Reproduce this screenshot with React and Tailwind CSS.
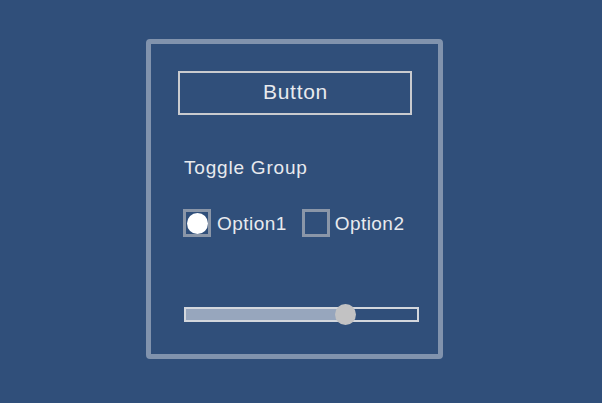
export default function App() {
  return (
    <div
      className="h-[403px] w-[602px] bg-[#304f7a] pl-[146px] pt-[39px] text-[#e8eaee]"
      style={{ fontFamily: '"Liberation Sans", Arial, sans-serif' }}
    >
      <div className="flex h-[320px] w-[297px] flex-col rounded-[4px] border-[5px] border-[#8193ad] pl-[27px] pt-[27px]">
        <button className="flex h-[44px] w-[234px] items-center justify-center border-2 border-[#c9cbcf] pb-[2px] pl-[1px] text-[21px] tracking-[0.7px]">
          Button
        </button>

        <div className="mt-[42px] pl-[6px] text-[19px] leading-[22px] tracking-[0.8px]">Toggle Group</div>

        <div className="mt-[29px] flex items-center pl-[5px] text-[19px] tracking-[0.45px]">
          <div className="flex h-[28px] w-[28px] items-center justify-center border-[3px] border-[#8a96a8]">
            <div className="h-[21px] w-[21px] rounded-full bg-white" />
          </div>
          <span className="ml-[6px] pt-[2px]">Option1</span>
          <div className="ml-[15px] h-[28px] w-[28px] border-[3px] border-[#8a96a8]" />
          <span className="ml-[5px] pt-[2px]">Option2</span>
        </div>

        <div className="relative ml-[6px] mt-[68px] h-[15px] w-[235px] border-2 border-[#d3d7dd]">
          <div className="h-full w-[158px] bg-[#97a6bd]" />
          <div className="absolute left-[149px] top-[-5px] h-[21px] w-[21px] rounded-full bg-[#c2c2c3]" />
        </div>
      </div>
    </div>
  );
}
